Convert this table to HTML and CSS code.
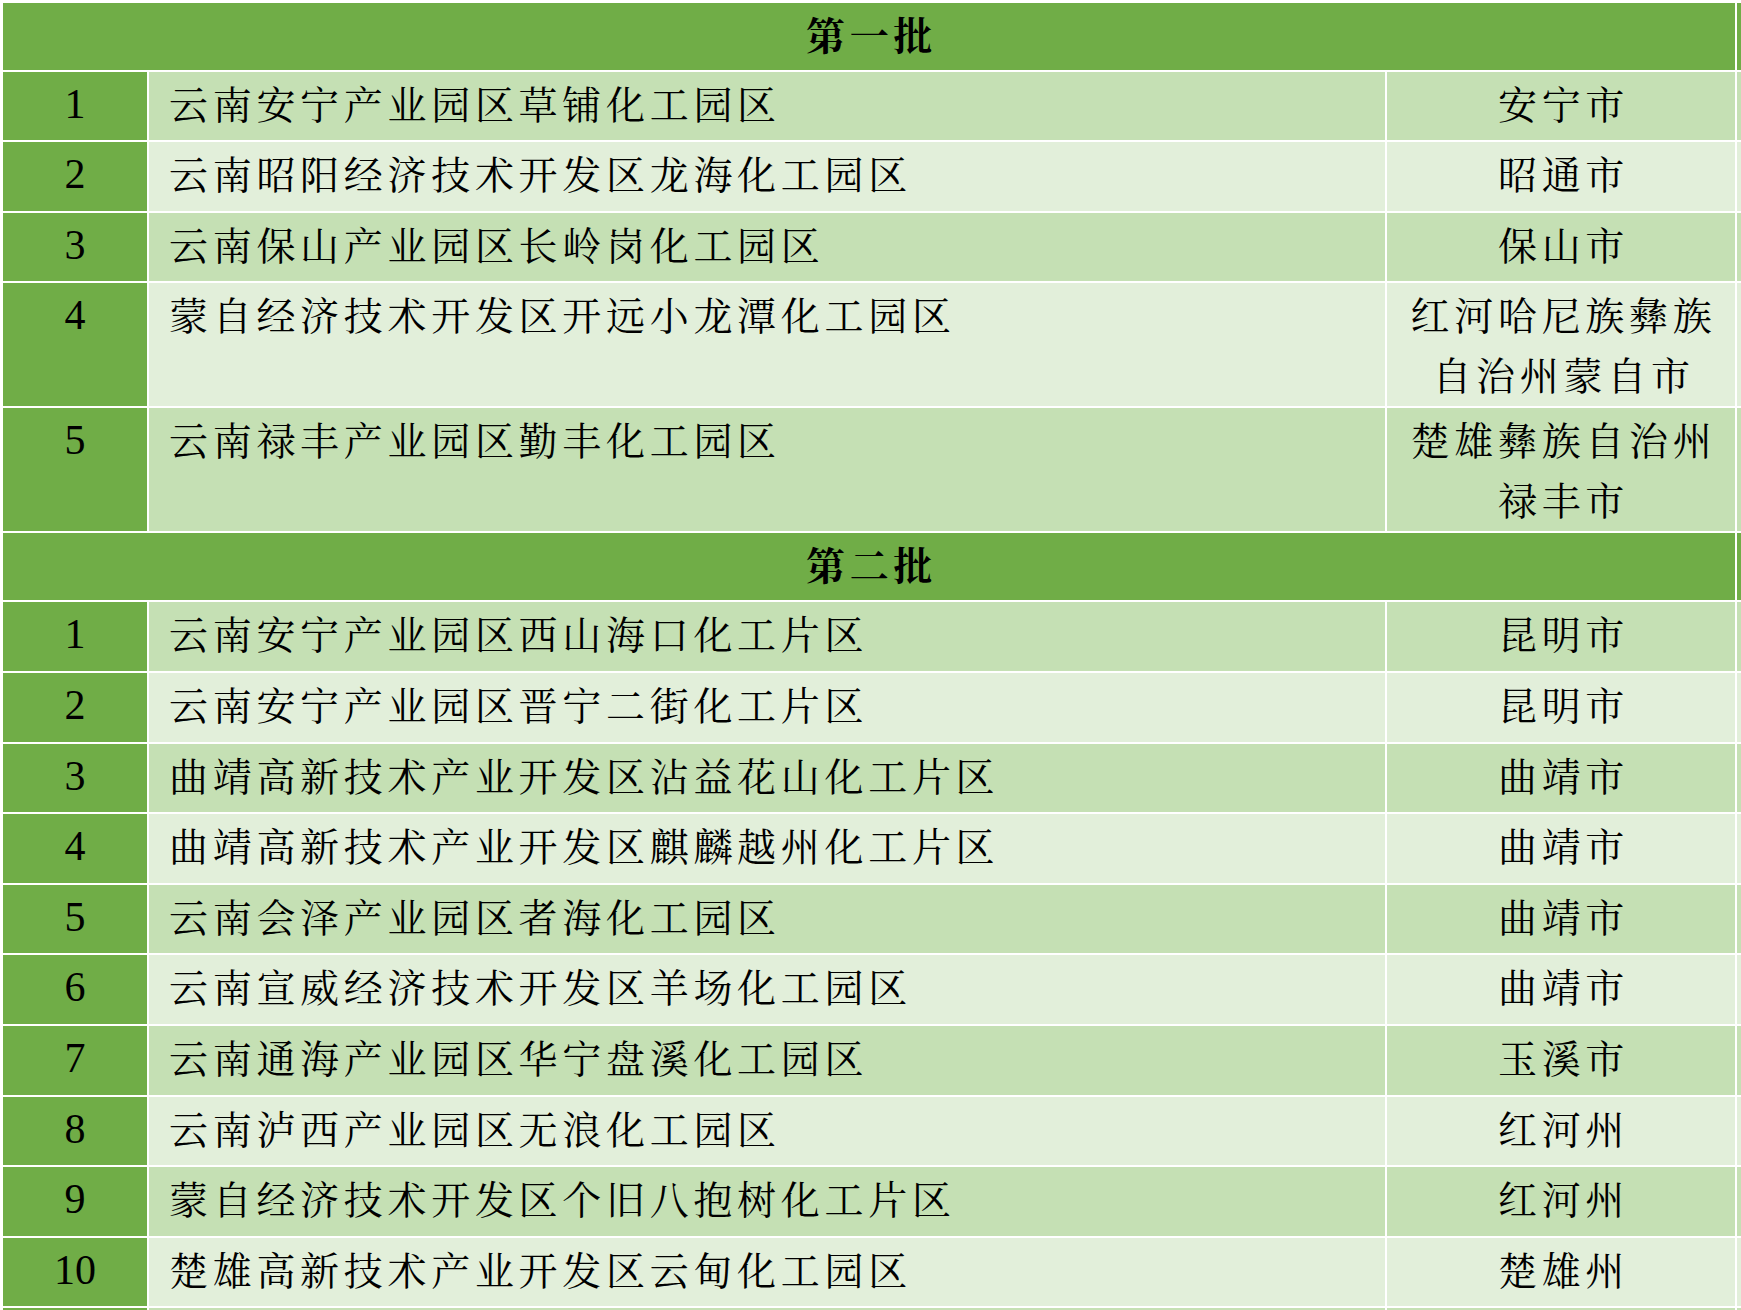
FILE: index.html
```html
<!DOCTYPE html>
<html lang="zh-CN">
<head>
<meta charset="utf-8">
<title>化工园区名单</title>
<link rel="stylesheet" href="styles.css">
</head>
<body>
<table class="list">
  <colgroup>
    <col class="c-no">
    <col class="c-name">
    <col class="c-city">
    <col class="c-extra">
  </colgroup>
  <tbody>
    <tr class="hdr"><td colspan="3" class="batch">第一批</td><td class="extra"></td></tr>
    <tr class="single odd"><td class="no">1</td><td class="name">云南安宁产业园区草铺化工园区</td><td class="city">安宁市</td><td class="extra"></td></tr>
    <tr class="single even"><td class="no">2</td><td class="name">云南昭阳经济技术开发区龙海化工园区</td><td class="city">昭通市</td><td class="extra"></td></tr>
    <tr class="single odd"><td class="no">3</td><td class="name">云南保山产业园区长岭岗化工园区</td><td class="city">保山市</td><td class="extra"></td></tr>
    <tr class="double even"><td class="no">4</td><td class="name">蒙自经济技术开发区开远小龙潭化工园区</td><td class="city">红河哈尼族彝族<br>自治州蒙自市</td><td class="extra"></td></tr>
    <tr class="double odd"><td class="no">5</td><td class="name">云南禄丰产业园区勤丰化工园区</td><td class="city">楚雄彝族自治州<br>禄丰市</td><td class="extra"></td></tr>
    <tr class="hdr"><td colspan="3" class="batch">第二批</td><td class="extra"></td></tr>
    <tr class="single odd"><td class="no">1</td><td class="name">云南安宁产业园区西山海口化工片区</td><td class="city">昆明市</td><td class="extra"></td></tr>
    <tr class="single even"><td class="no">2</td><td class="name">云南安宁产业园区晋宁二街化工片区</td><td class="city">昆明市</td><td class="extra"></td></tr>
    <tr class="single odd"><td class="no">3</td><td class="name">曲靖高新技术产业开发区沾益花山化工片区</td><td class="city">曲靖市</td><td class="extra"></td></tr>
    <tr class="single even"><td class="no">4</td><td class="name">曲靖高新技术产业开发区麒麟越州化工片区</td><td class="city">曲靖市</td><td class="extra"></td></tr>
    <tr class="single odd"><td class="no">5</td><td class="name">云南会泽产业园区者海化工园区</td><td class="city">曲靖市</td><td class="extra"></td></tr>
    <tr class="single even"><td class="no">6</td><td class="name">云南宣威经济技术开发区羊场化工园区</td><td class="city">曲靖市</td><td class="extra"></td></tr>
    <tr class="single odd"><td class="no">7</td><td class="name">云南通海产业园区华宁盘溪化工园区</td><td class="city">玉溪市</td><td class="extra"></td></tr>
    <tr class="single even"><td class="no">8</td><td class="name">云南泸西产业园区无浪化工园区</td><td class="city">红河州</td><td class="extra"></td></tr>
    <tr class="single odd"><td class="no">9</td><td class="name">蒙自经济技术开发区个旧八抱树化工片区</td><td class="city">红河州</td><td class="extra"></td></tr>
    <tr class="single even"><td class="no">10</td><td class="name">楚雄高新技术产业开发区云甸化工园区</td><td class="city">楚雄州</td><td class="extra"></td></tr>
    <tr class="single odd"><td class="no"></td><td class="name"></td><td class="city"></td><td class="extra"></td></tr>
  </tbody>
</table>
</body>
</html>
```

FILE: styles.css
```css
html, body {
  margin: 0;
  padding: 0;
  background: #ffffff;
  overflow: hidden;
}

body {
  width: 1741px;
  height: 1310px;
}

.list {
  margin: 0.7px 0 0 1px;
  border-collapse: separate;
  border-spacing: 2px;
  table-layout: fixed;
  width: 1838px;
  background: #ffffff;
  font-family: "Liberation Serif", "Noto Serif CJK SC", "Noto Sans CJK SC", serif;
  color: #000000;
}

.c-no { width: 144px; }
.c-name { width: 1236px; }
.c-city { width: 348px; }
.c-extra { width: 100px; }

.list td {
  padding: 2px 0 0 0;
  vertical-align: top;
  line-height: 60px;
  white-space: nowrap;
  overflow: hidden;
}

.hdr { height: 67px; }
.single { height: 68.6px; }
.double { height: 123px; }

.hdr td { background: #70ad47; }
.odd td { background: #c5e0b4; }
.even td { background: #e2efda; }

.list td.no {
  background: #70ad47;
  text-align: center;
  font-family: "Liberation Serif", "Times New Roman", "DejaVu Serif", serif;
  font-size: 42px;
}

.list td.batch {
  text-align: center;
  font-family: "Noto Serif CJK SC", "Noto Sans CJK SC", sans-serif;
  font-weight: 700;
  font-size: 39px;
  letter-spacing: 4.6px;
  padding: 0 0 0 5px;
}

.list td.name {
  font-family: "Noto Serif CJK SC", "Noto Sans CJK SC", sans-serif;
  font-size: 39px;
  letter-spacing: 4.7px;
  padding: 0 0 0 20px;
}

.list td.city {
  text-align: center;
  font-family: "Noto Serif CJK SC", "Noto Sans CJK SC", sans-serif;
  font-size: 39px;
  letter-spacing: 4.7px;
  padding: 0 0 0 5px;
}
```
